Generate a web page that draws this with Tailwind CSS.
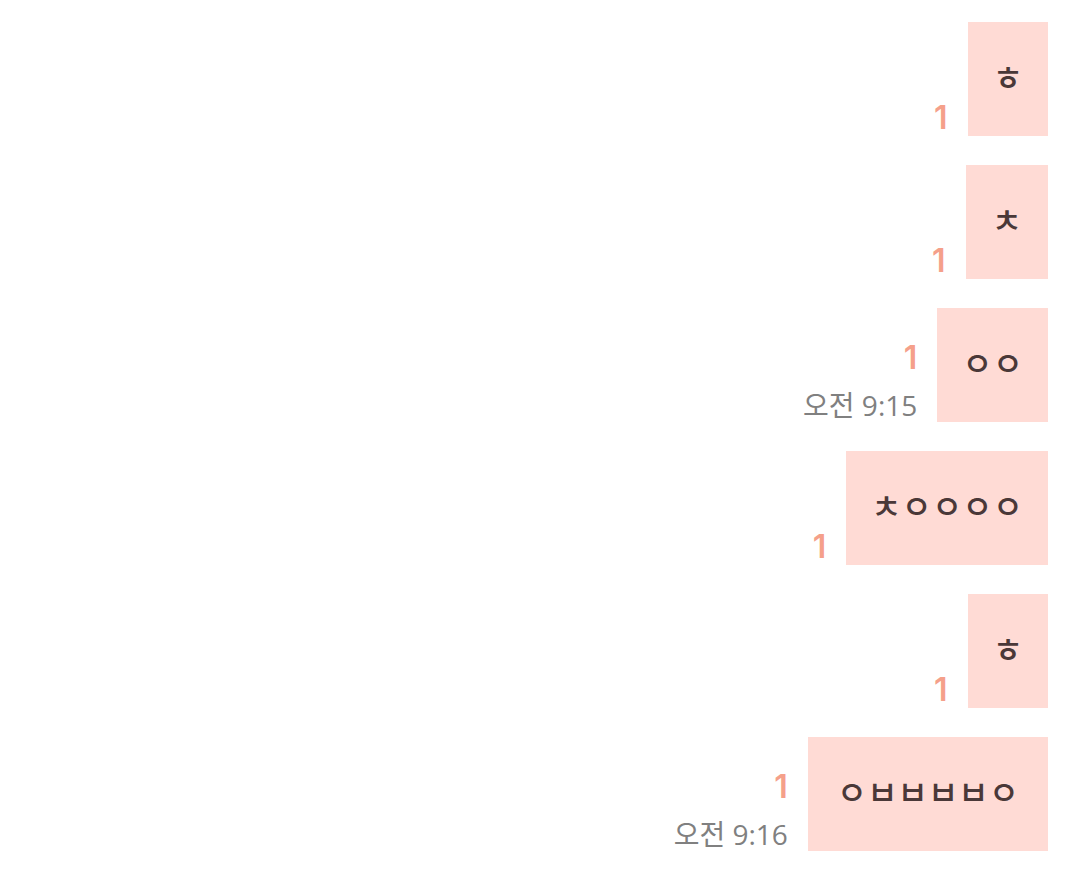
<!DOCTYPE html>
<html lang="ko">
<head>
<meta charset="utf-8">
<meta name="viewport" content="width=device-width, initial-scale=1">
<title>채팅</title>
<script src="https://cdn.jsdelivr.net/npm/@tailwindcss/browser@4"></script>
</head>
<body class="bg-white font-['Noto_Sans_CJK_KR',sans-serif]">
<main>
<ol class="flex flex-col items-end gap-[29px] pt-[22px] pr-8">
  <li class="flex items-stretch gap-5">
    <div class="flex flex-col items-end justify-end gap-3"><span class="font-['Inter'] text-[32px] leading-9 font-semibold text-[#f5a08a]">1</span></div>
    <p class="bg-[#ffdbd5] px-[25px] pt-8 pb-[38px] text-[33px] leading-[44px] font-medium text-[#4a3838]">ㅎ</p>
  </li>
  <li class="flex items-stretch gap-5">
    <div class="flex flex-col items-end justify-end gap-3"><span class="font-['Inter'] text-[32px] leading-9 font-semibold text-[#f5a08a]">1</span></div>
    <p class="bg-[#ffdbd5] px-[26px] pt-8 pb-[38px] text-[33px] leading-[44px] font-medium text-[#4a3838]">ㅊ</p>
  </li>
  <li class="flex items-stretch gap-5">
    <div class="flex flex-col items-end justify-end gap-3"><span class="font-['Inter'] text-[32px] leading-9 font-semibold text-[#f5a08a]">1</span><time datetime="09:15" class="font-['Open_Sans','Noto_Sans_CJK_KR',sans-serif] text-[28px] leading-[34px] font-normal text-[#808080]">오전 9:15</time></div>
    <p class="bg-[#ffdbd5] px-[25px] pt-8 pb-[38px] text-[33px] leading-[44px] font-medium text-[#4a3838]">ㅇㅇ</p>
  </li>
  <li class="flex items-stretch gap-5">
    <div class="flex flex-col items-end justify-end gap-3"><span class="font-['Inter'] text-[32px] leading-9 font-semibold text-[#f5a08a]">1</span></div>
    <p class="bg-[#ffdbd5] px-[25px] pt-8 pb-[38px] text-[33px] leading-[44px] font-medium text-[#4a3838]">ㅊㅇㅇㅇㅇ</p>
  </li>
  <li class="flex items-stretch gap-5">
    <div class="flex flex-col items-end justify-end gap-3"><span class="font-['Inter'] text-[32px] leading-9 font-semibold text-[#f5a08a]">1</span></div>
    <p class="bg-[#ffdbd5] px-[25px] pt-8 pb-[38px] text-[33px] leading-[44px] font-medium text-[#4a3838]">ㅎ</p>
  </li>
  <li class="flex items-stretch gap-5">
    <div class="flex flex-col items-end justify-end gap-3"><span class="font-['Inter'] text-[32px] leading-9 font-semibold text-[#f5a08a]">1</span><time datetime="09:16" class="font-['Open_Sans','Noto_Sans_CJK_KR',sans-serif] text-[28px] leading-[34px] font-normal text-[#808080]">오전 9:16</time></div>
    <p class="bg-[#ffdbd5] px-[29px] pt-8 pb-[38px] text-[33px] leading-[44px] font-medium text-[#4a3838]">ㅇㅂㅂㅂㅂㅇ</p>
  </li>
</ol>
</main>
</body>
</html>
